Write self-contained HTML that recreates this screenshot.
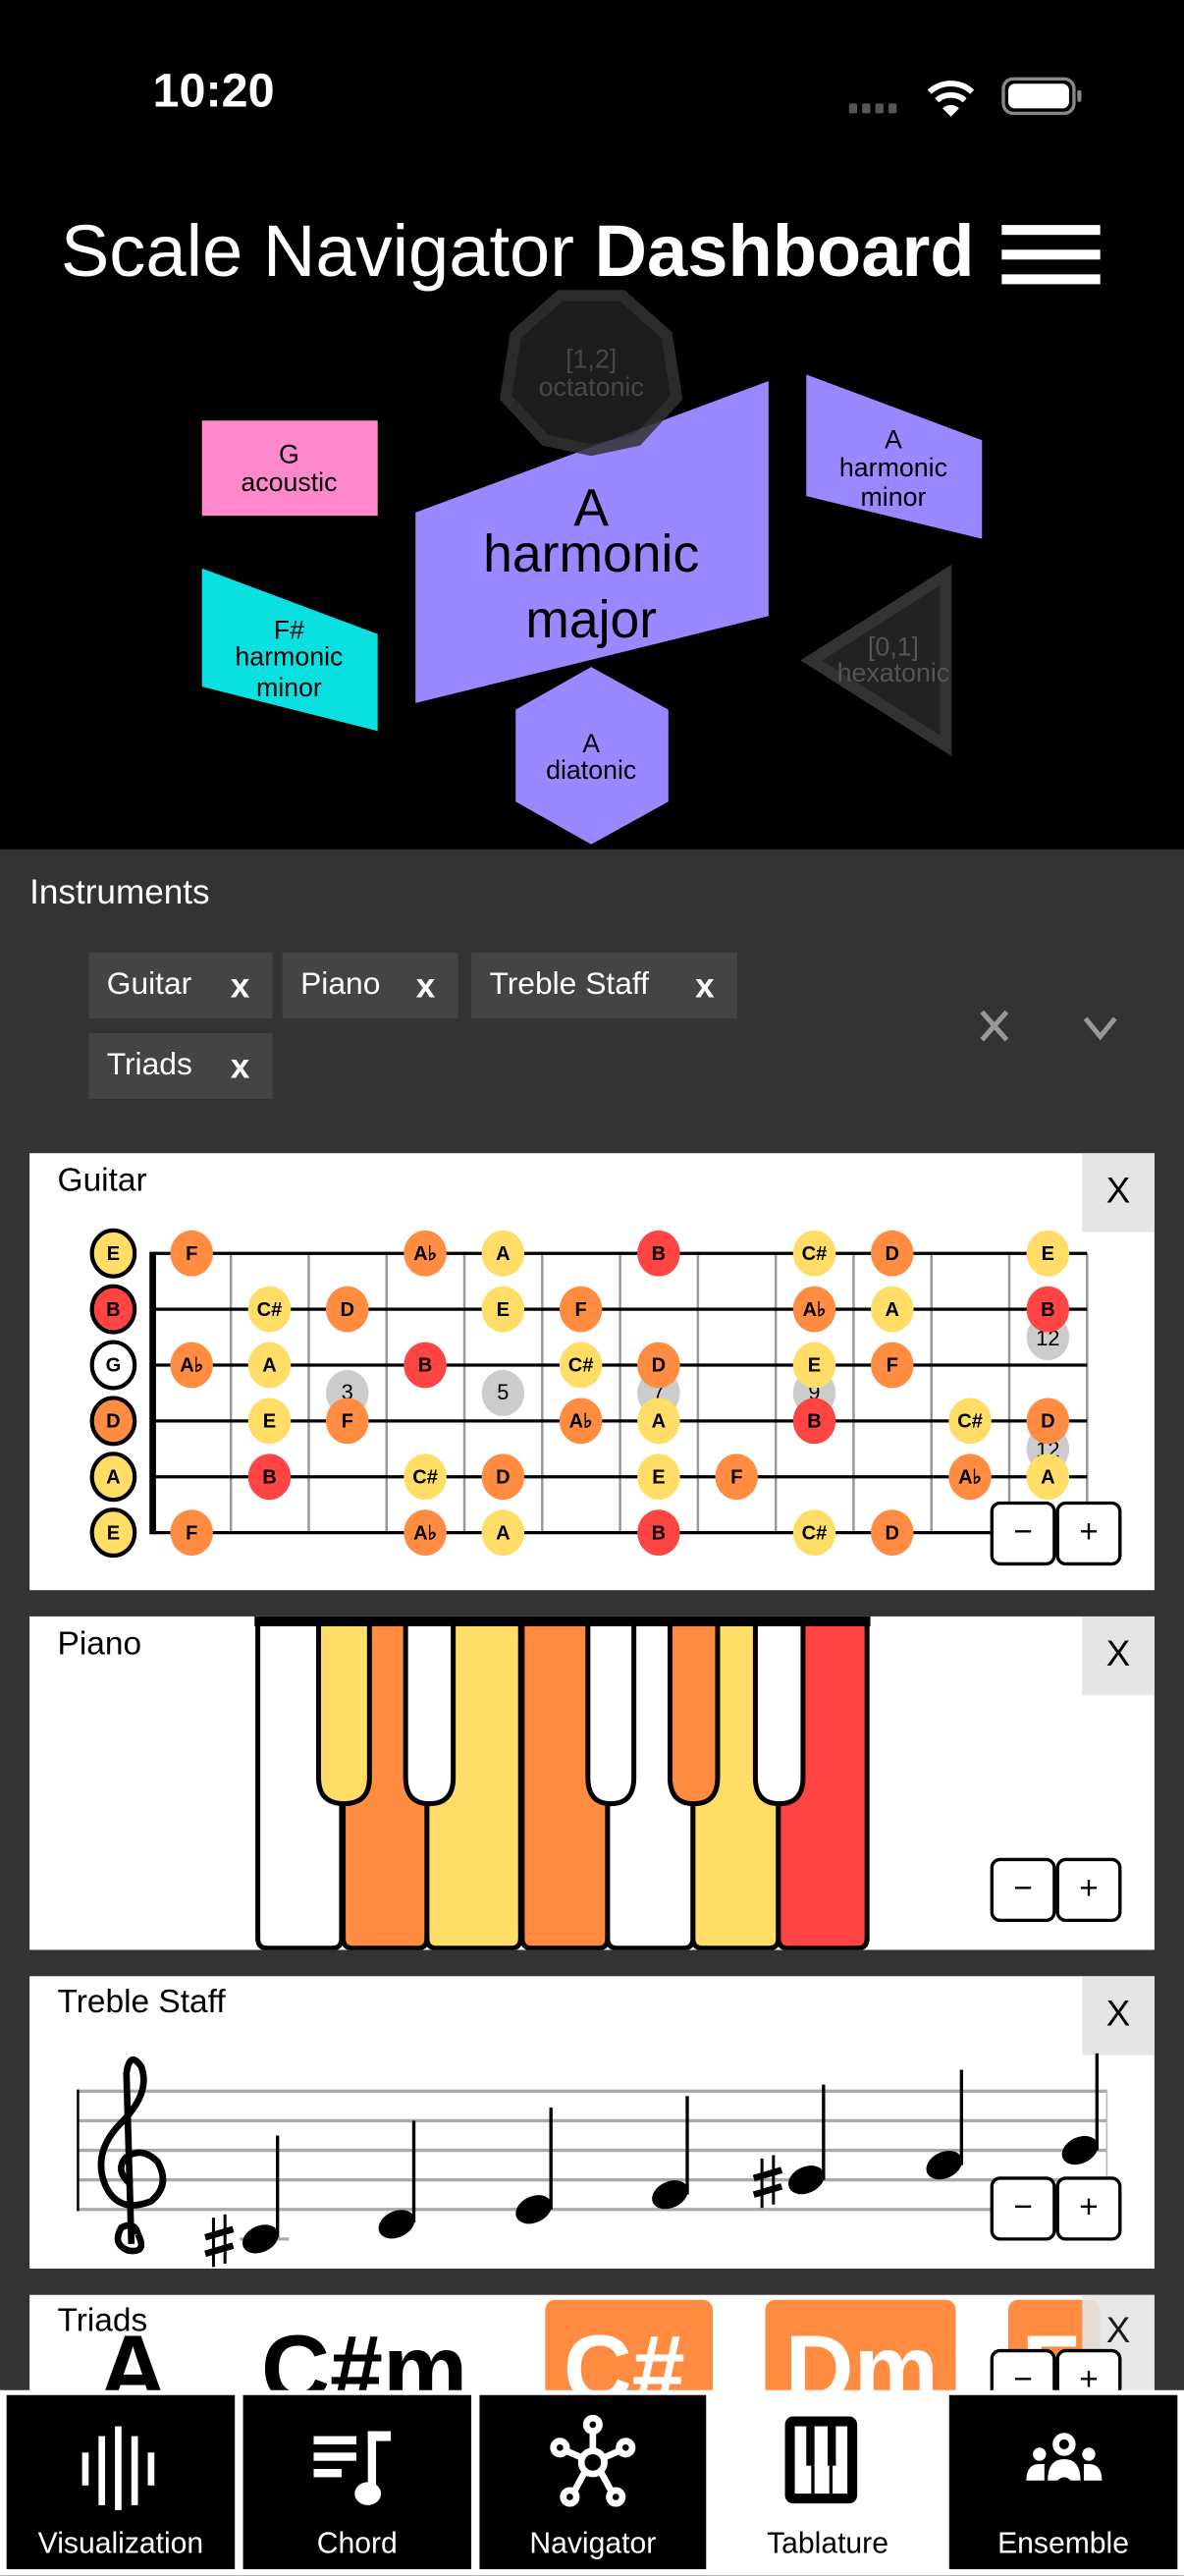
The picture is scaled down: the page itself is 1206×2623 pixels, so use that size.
<!DOCTYPE html>
<html><head><meta charset="utf-8"><style>
html,body{margin:0;padding:0;background:#333;}
body{width:1206px;height:2622px;overflow:hidden;position:relative;font-family:"Liberation Sans",sans-serif;}
#w{position:absolute;left:0;top:0;width:721px;height:1568px;transform:scale(1.67268);transform-origin:0 0;background:#333;overflow:hidden;}
.a{position:absolute;}
.chip{position:absolute;background:#444;color:#fff;font-size:19px;height:40px;line-height:40px;padding-left:11px;box-sizing:border-box;}
.chip b{position:absolute;right:14px;top:1px;font-size:21px;}
.card{position:absolute;left:18px;width:685px;background:#fff;overflow:hidden;}
.ttl{position:absolute;left:17px;font-size:20px;color:#000;}
.xb{position:absolute;right:0;top:0;width:44px;height:48px;background:#e5e5e5;font-size:22px;text-align:center;line-height:46px;color:#000;}
.btn{position:absolute;width:36px;height:35px;border:2px solid #000;border-radius:6px;background:#fff;font-size:20px;text-align:center;line-height:34px;color:#000;}
.nb{position:absolute;top:1458px;height:106px;background:#000;color:#fff;font-size:18px;text-align:center;}
.nb span{position:absolute;left:0;right:0;top:80px;}
</style></head><body><div id="w">
<div class="a" style="left:0;top:0;width:721px;height:517px;background:#000"></div>
<div class="a" style="left:93px;top:40px;color:#fff;font-size:29px;font-weight:bold">10:20</div>
<svg class="a" style="left:510px;top:40px" width="160" height="40" viewBox="510 40 160 40">
<g fill="#555"><rect x="517" y="63" width="5" height="6" rx="1"/><rect x="525" y="63" width="5" height="6" rx="1"/><rect x="533" y="63" width="5" height="6" rx="1"/><rect x="541" y="63" width="5" height="6" rx="1"/></g>
<path d="M566 56 A19 19 0 0 1 592 56" stroke="#fff" stroke-width="3.5" fill="none"/>
<path d="M570.5 61 A13 13 0 0 1 587.5 61" stroke="#fff" stroke-width="3.5" fill="none"/>
<path d="M574 66 L579 71 L584 66 A7 7 0 0 0 574 66Z" fill="#fff"/>
<rect x="611" y="48" width="43" height="21" rx="6" fill="none" stroke="#888" stroke-width="2"/>
<rect x="614" y="51" width="37" height="15" rx="4" fill="#fff"/>
<rect x="656" y="55" width="2.5" height="7" rx="1" fill="#888"/>
</svg>
<div class="a" style="left:37px;top:129px;color:#fff;font-size:44.3px;white-space:nowrap">Scale Navigator <b>Dashboard</b></div>
<div class="a" style="left:610px;top:137px;width:60px;height:6px;background:#fff"></div>
<div class="a" style="left:610px;top:152px;width:60px;height:6px;background:#fff"></div>
<div class="a" style="left:610px;top:167px;width:60px;height:6px;background:#fff"></div>
<svg class="a" style="left:0;top:0" width="721" height="517" viewBox="0 0 721 517" font-family="Liberation Sans, sans-serif" text-anchor="middle">
<polygon points="253,312 468,232 468,375 253,428" fill="#9988ff"/>
<g opacity="0.85">
<polygon points="341,180 379,180 406,204 412,242 388,268 360,274 332,268 308,242 314,204" fill="#222" stroke="#333" stroke-width="7"/>
<text x="360" y="224" font-size="16" fill="#555">[1,2]</text>
<text x="360" y="241" font-size="16" fill="#555">octatonic</text>
</g>
<rect x="123" y="256" width="107" height="58" fill="#ff88cc"/>
<text x="176" y="282" font-size="16">G</text><text x="176" y="299" font-size="16">acoustic</text>
<text x="360" y="320" font-size="32">A</text>
<text x="360" y="348" font-size="32">harmonic</text>
<text x="360" y="388" font-size="32">major</text>
<polygon points="491,228 598,268 598,328 491,302" fill="#9988ff"/>
<text x="544" y="273" font-size="16">A</text><text x="544" y="290" font-size="16">harmonic</text><text x="544" y="308" font-size="16">minor</text>
<polygon points="123,346 230,386 230,445 123,418" fill="#0be0e0"/>
<text x="176" y="389" font-size="16">F#</text><text x="176" y="405" font-size="16">harmonic</text><text x="176" y="424" font-size="16">minor</text>
<polygon points="360,406 407,432 407,488 360,514 314,488 314,432" fill="#9988ff"/>
<text x="360" y="458" font-size="16">A</text><text x="360" y="474" font-size="16">diatonic</text>
<polygon points="494,402 576,350 576,454" fill="#222" stroke="#333" stroke-width="7"/>
<text x="544" y="399" font-size="16" fill="#555">[0,1]</text><text x="544" y="415" font-size="16" fill="#555">hexatonic</text>
</svg>
<div class="a" style="left:18px;top:532px;color:#fff;font-size:21px">Instruments</div>
<div class="chip" style="left:54px;top:580px;width:112px">Guitar<b>x</b></div>
<div class="chip" style="left:172px;top:580px;width:107px">Piano<b>x</b></div>
<div class="chip" style="left:287px;top:580px;width:162px">Treble Staff<b>x</b></div>
<div class="chip" style="left:54px;top:629px;width:112px">Triads<b>x</b></div>
<svg class="a" style="left:595px;top:612px" width="90" height="26" viewBox="595 612 90 26"><path d="M598 616 L613 633 M613 616 L598 633" stroke="#999" stroke-width="3"/><path d="M661 620 L670 631 L679 620" stroke="#999" stroke-width="3" fill="none"/></svg>

<!-- Guitar -->
<div class="card" style="top:702px;height:266px">
<div class="ttl" style="top:6px">Guitar</div><div class="xb">X</div>
<svg class="a" style="left:-18px;top:-702px" width="721" height="1000" viewBox="0 0 721 1000" font-family="Liberation Sans, sans-serif" font-size="12" font-weight="bold" text-anchor="middle">
<g stroke="#999" stroke-width="1.5"><line x1="140.6" y1="763" x2="140.6" y2="933"/><line x1="188" y1="763" x2="188" y2="933"/><line x1="235.4" y1="763" x2="235.4" y2="933"/><line x1="282.8" y1="763" x2="282.8" y2="933"/><line x1="330.2" y1="763" x2="330.2" y2="933"/><line x1="377.6" y1="763" x2="377.6" y2="933"/><line x1="425" y1="763" x2="425" y2="933"/><line x1="472.4" y1="763" x2="472.4" y2="933"/><line x1="519.8" y1="763" x2="519.8" y2="933"/><line x1="567.2" y1="763" x2="567.2" y2="933"/><line x1="614.6" y1="763" x2="614.6" y2="933"/><line x1="662" y1="763" x2="662" y2="933"/></g>
<g stroke="#000" stroke-width="2"><line x1="93" y1="763" x2="662" y2="763"/><line x1="93" y1="797" x2="662" y2="797"/><line x1="93" y1="831" x2="662" y2="831"/><line x1="93" y1="865" x2="662" y2="865"/><line x1="93" y1="899" x2="662" y2="899"/><line x1="93" y1="933" x2="662" y2="933"/></g>
<line x1="93" y1="762" x2="93" y2="934" stroke="#000" stroke-width="4"/>
<g fill="#ccc"><ellipse cx="211.5" cy="848" rx="13" ry="14"/><ellipse cx="306.3" cy="848" rx="13" ry="14"/><ellipse cx="401.1" cy="848" rx="13" ry="14"/><ellipse cx="495.9" cy="848" rx="13" ry="14"/><ellipse cx="638.1" cy="814" rx="13" ry="14"/><ellipse cx="638.1" cy="882" rx="13" ry="14"/></g>
<g font-weight="normal" font-size="13"><text x="211.5" y="852">3</text><text x="306.3" y="852">5</text><text x="401.1" y="852">7</text><text x="495.9" y="852">9</text><text x="638.1" y="819">12</text><text x="638.1" y="887">12</text></g>
<g stroke="#000" stroke-width="2.5"><ellipse cx="69" cy="763" rx="13" ry="14" fill="#ffdd66"/><ellipse cx="69" cy="797" rx="13" ry="14" fill="#ff4444"/><ellipse cx="69" cy="831" rx="13" ry="14" fill="#fff"/><ellipse cx="69" cy="865" rx="13" ry="14" fill="#ff8c40"/><ellipse cx="69" cy="899" rx="13" ry="14" fill="#ffdd66"/><ellipse cx="69" cy="933" rx="13" ry="14" fill="#ffdd66"/></g>
<g>
<ellipse cx="116.7" cy="763" rx="13" ry="14" fill="#ff8c40"/><ellipse cx="258.9" cy="763" rx="13" ry="14" fill="#ff8c40"/><ellipse cx="306.3" cy="763" rx="13" ry="14" fill="#ffdd66"/><ellipse cx="401.1" cy="763" rx="13" ry="14" fill="#ff4444"/><ellipse cx="495.9" cy="763" rx="13" ry="14" fill="#ffdd66"/><ellipse cx="543.3" cy="763" rx="13" ry="14" fill="#ff8c40"/><ellipse cx="638.1" cy="763" rx="13" ry="14" fill="#ffdd66"/>
<ellipse cx="164.1" cy="797" rx="13" ry="14" fill="#ffdd66"/><ellipse cx="211.5" cy="797" rx="13" ry="14" fill="#ff8c40"/><ellipse cx="306.3" cy="797" rx="13" ry="14" fill="#ffdd66"/><ellipse cx="353.7" cy="797" rx="13" ry="14" fill="#ff8c40"/><ellipse cx="495.9" cy="797" rx="13" ry="14" fill="#ff8c40"/><ellipse cx="543.3" cy="797" rx="13" ry="14" fill="#ffdd66"/><ellipse cx="638.1" cy="797" rx="13" ry="14" fill="#ff4444"/>
<ellipse cx="116.7" cy="831" rx="13" ry="14" fill="#ff8c40"/><ellipse cx="164.1" cy="831" rx="13" ry="14" fill="#ffdd66"/><ellipse cx="258.9" cy="831" rx="13" ry="14" fill="#ff4444"/><ellipse cx="353.7" cy="831" rx="13" ry="14" fill="#ffdd66"/><ellipse cx="401.1" cy="831" rx="13" ry="14" fill="#ff8c40"/><ellipse cx="495.9" cy="831" rx="13" ry="14" fill="#ffdd66"/><ellipse cx="543.3" cy="831" rx="13" ry="14" fill="#ff8c40"/>
<ellipse cx="164.1" cy="865" rx="13" ry="14" fill="#ffdd66"/><ellipse cx="211.5" cy="865" rx="13" ry="14" fill="#ff8c40"/><ellipse cx="353.7" cy="865" rx="13" ry="14" fill="#ff8c40"/><ellipse cx="401.1" cy="865" rx="13" ry="14" fill="#ffdd66"/><ellipse cx="495.9" cy="865" rx="13" ry="14" fill="#ff4444"/><ellipse cx="590.7" cy="865" rx="13" ry="14" fill="#ffdd66"/><ellipse cx="638.1" cy="865" rx="13" ry="14" fill="#ff8c40"/>
<ellipse cx="164.1" cy="899" rx="13" ry="14" fill="#ff4444"/><ellipse cx="258.9" cy="899" rx="13" ry="14" fill="#ffdd66"/><ellipse cx="306.3" cy="899" rx="13" ry="14" fill="#ff8c40"/><ellipse cx="401.1" cy="899" rx="13" ry="14" fill="#ffdd66"/><ellipse cx="448.5" cy="899" rx="13" ry="14" fill="#ff8c40"/><ellipse cx="590.7" cy="899" rx="13" ry="14" fill="#ff8c40"/><ellipse cx="638.1" cy="899" rx="13" ry="14" fill="#ffdd66"/>
<ellipse cx="116.7" cy="933" rx="13" ry="14" fill="#ff8c40"/><ellipse cx="258.9" cy="933" rx="13" ry="14" fill="#ff8c40"/><ellipse cx="306.3" cy="933" rx="13" ry="14" fill="#ffdd66"/><ellipse cx="401.1" cy="933" rx="13" ry="14" fill="#ff4444"/><ellipse cx="495.9" cy="933" rx="13" ry="14" fill="#ffdd66"/><ellipse cx="543.3" cy="933" rx="13" ry="14" fill="#ff8c40"/>
</g>
<g>
<text x="69" y="767">E</text><text x="69" y="801">B</text><text x="69" y="835">G</text><text x="69" y="869">D</text><text x="69" y="903">A</text><text x="69" y="937">E</text>
<text x="116.7" y="767">F</text><text x="258.9" y="767">A♭</text><text x="306.3" y="767">A</text><text x="401.1" y="767">B</text><text x="495.9" y="767">C#</text><text x="543.3" y="767">D</text><text x="638.1" y="767">E</text>
<text x="164.1" y="801">C#</text><text x="211.5" y="801">D</text><text x="306.3" y="801">E</text><text x="353.7" y="801">F</text><text x="495.9" y="801">A♭</text><text x="543.3" y="801">A</text><text x="638.1" y="801">B</text>
<text x="116.7" y="835">A♭</text><text x="164.1" y="835">A</text><text x="258.9" y="835">B</text><text x="353.7" y="835">C#</text><text x="401.1" y="835">D</text><text x="495.9" y="835">E</text><text x="543.3" y="835">F</text>
<text x="164.1" y="869">E</text><text x="211.5" y="869">F</text><text x="353.7" y="869">A♭</text><text x="401.1" y="869">A</text><text x="495.9" y="869">B</text><text x="590.7" y="869">C#</text><text x="638.1" y="869">D</text>
<text x="164.1" y="903">B</text><text x="258.9" y="903">C#</text><text x="306.3" y="903">D</text><text x="401.1" y="903">E</text><text x="448.5" y="903">F</text><text x="590.7" y="903">A♭</text><text x="638.1" y="903">A</text>
<text x="116.7" y="937">F</text><text x="258.9" y="937">A♭</text><text x="306.3" y="937">A</text><text x="401.1" y="937">B</text><text x="495.9" y="937">C#</text><text x="543.3" y="937">D</text>
</g></svg>
<div class="btn" style="left:585px;top:212px">−</div><div class="btn" style="left:625px;top:212px">+</div>
</div>

<!-- Piano -->
<div class="card" style="top:984px;height:203px">
<div class="ttl" style="top:6px">Piano</div><div class="xb">X</div>
<svg class="a" style="left:-18px;top:-984px" width="721" height="1200" viewBox="0 0 721 1200">
<g stroke="#000" stroke-width="3">
<path d="M157 986 H208 V1180 Q208 1186 202 1186 H163 Q157 1186 157 1180Z" fill="#fff"/>
<path d="M209 986 H260 V1180 Q260 1186 254 1186 H215 Q209 1186 209 1180Z" fill="#ff8c40"/>
<path d="M260 986 H317 V1180 Q317 1186 311 1186 H266 Q260 1186 260 1180Z" fill="#ffdd66"/>
<path d="M318 986 H370 V1180 Q370 1186 364 1186 H324 Q318 1186 318 1180Z" fill="#ff8c40"/>
<path d="M370 986 H422 V1180 Q422 1186 416 1186 H376 Q370 1186 370 1180Z" fill="#fff"/>
<path d="M422 986 H474 V1180 Q474 1186 468 1186 H428 Q422 1186 422 1180Z" fill="#ffdd66"/>
<path d="M474 986 H528 V1180 Q528 1186 522 1186 H480 Q474 1186 474 1180Z" fill="#ff4444"/>
<path d="M194 986 V1082 Q194 1098 209.5 1098 Q225 1098 225 1082 V986" fill="#ffdd66"/>
<path d="M247 986 V1082 Q247 1098 261.5 1098 Q276 1098 276 1082 V986" fill="#fff"/>
<path d="M358 986 V1082 Q358 1098 372 1098 Q386 1098 386 1082 V986" fill="#fff"/>
<path d="M408 986 V1082 Q408 1098 422.5 1098 Q437 1098 437 1082 V986" fill="#ff8c40"/>
<path d="M460 986 V1082 Q460 1098 474.5 1098 Q489 1098 489 1082 V986" fill="#fff"/>
</g>
<rect x="155" y="984" width="375" height="6" fill="#000"/>
</svg>
<div class="btn" style="left:585px;top:147px">−</div><div class="btn" style="left:625px;top:147px">+</div>
</div>

<!-- Treble -->
<div class="card" style="top:1203px;height:178px">
<div class="ttl" style="top:5px">Treble Staff</div><div class="xb">X</div>
<svg class="a" style="left:-18px;top:-1203px" width="721" height="1400" viewBox="0 0 721 1400" font-family="DejaVu Sans, sans-serif">
<g stroke="#aaa" stroke-width="2"><line x1="47" y1="1273" x2="674" y2="1273"/><line x1="47" y1="1291" x2="674" y2="1291"/><line x1="47" y1="1309" x2="674" y2="1309"/><line x1="47" y1="1327" x2="674" y2="1327"/><line x1="47" y1="1345" x2="674" y2="1345"/><line x1="146" y1="1363" x2="176" y2="1363"/></g>
<line x1="47.5" y1="1272" x2="47.5" y2="1346" stroke="#000" stroke-width="1.5"/>
<line x1="674" y1="1272" x2="674" y2="1346" stroke="#bbb" stroke-width="1"/>
<path d="M84 1360 Q90 1372 78 1370 Q68 1366 74 1356 Q82 1352 84 1360 M80 1366 L77 1262 Q79 1248 86 1258 Q92 1274 74 1292 Q56 1310 64 1330 Q72 1348 92 1340 Q104 1330 96 1316 Q86 1306 76 1314 Q70 1322 80 1330" stroke="#000" stroke-width="4" fill="none"/>
<g fill="#000">
<ellipse cx="158.6" cy="1363" rx="11.5" ry="8" transform="rotate(-25 158.6 1363)"/><rect x="168" y="1300" width="2" height="62"/>
<ellipse cx="241.5" cy="1354" rx="11.5" ry="8" transform="rotate(-25 241.5 1354)"/><rect x="251" y="1291" width="2" height="62"/>
<ellipse cx="325" cy="1345" rx="11.5" ry="8" transform="rotate(-25 325 1345)"/><rect x="334.5" y="1283" width="2" height="62"/>
<ellipse cx="408" cy="1336" rx="11.5" ry="8" transform="rotate(-25 408 1336)"/><rect x="417.5" y="1276" width="2" height="60"/>
<ellipse cx="491" cy="1327" rx="11.5" ry="8" transform="rotate(-25 491 1327)"/><rect x="500.5" y="1269" width="2" height="58"/>
<ellipse cx="575" cy="1318" rx="11.5" ry="8" transform="rotate(-25 575 1318)"/><rect x="584.5" y="1260" width="2" height="58"/>
<ellipse cx="657.6" cy="1309" rx="11.5" ry="8" transform="rotate(-25 657.6 1309)"/><rect x="667" y="1250" width="2" height="59"/>
</g>
<g stroke="#000"><path d="M130 1350 V1380 M137 1348 V1378" stroke-width="1.8"/><path d="M125 1362 L142 1357 M125 1372 L142 1367" stroke-width="4"/>
<path d="M464 1314 V1344 M471 1312 V1342" stroke-width="1.8"/><path d="M459 1326 L476 1321 M459 1336 L476 1331" stroke-width="4"/></g>
</svg>
<div class="btn" style="left:585px;top:122px">−</div><div class="btn" style="left:625px;top:122px">+</div>
</div>

<!-- Triads -->
<div class="card" style="top:1397px;height:60px">
<div class="a" style="left:314px;top:3px;width:102px;height:70px;background:#ff8c40;border-radius:6px"></div>
<div class="a" style="left:448px;top:3px;width:116px;height:70px;background:#ff8c40;border-radius:6px"></div>
<div class="a" style="left:596px;top:3px;width:56px;height:70px;background:#ff8c40;border-radius:6px"></div>
<div class="a" style="left:42px;top:12px;font-size:58px;font-weight:bold;color:#000">A</div>
<div class="a" style="left:141px;top:12px;font-size:58px;font-weight:bold;color:#000">C#m</div>
<div class="a" style="left:325px;top:12px;font-size:58px;font-weight:bold;color:#fff">C#</div>
<div class="a" style="left:460px;top:12px;font-size:58px;font-weight:bold;color:#fff">Dm</div>
<div class="a" style="left:604px;top:12px;font-size:58px;font-weight:bold;color:#fff">F</div>
<div class="ttl" style="top:5px">Triads</div>
<div class="xb" style="height:60px;opacity:.9;line-height:44px">X</div>
<div class="btn" style="left:585px;top:33px">−</div><div class="btn" style="left:625px;top:33px">+</div>
</div>

<!-- Nav -->
<div class="a" style="left:0;top:1455px;width:721px;height:113px;background:#fff"></div>
<div class="nb" style="left:4px;width:139px"><svg class="a" style="left:40px;top:10px" width="60" height="60" viewBox="0 0 60 60" fill="#fff"><rect x="6" y="25" width="4" height="20"/><rect x="16" y="15" width="4" height="42"/><rect x="26" y="9" width="4" height="56"/><rect x="36" y="15" width="4" height="42"/><rect x="46" y="25" width="4" height="20"/></svg><span>Visualization</span></div>
<div class="nb" style="left:148px;width:139px"><svg class="a" style="left:40px;top:10px" width="60" height="60" viewBox="0 0 60 60" fill="#fff"><rect x="3" y="15" width="26" height="5"/><rect x="3" y="25" width="26" height="5"/><rect x="3" y="35" width="17" height="5"/><rect x="36" y="12" width="5" height="40"/><rect x="36" y="12" width="14" height="6"/><ellipse cx="36" cy="50" rx="8" ry="7"/></svg><span>Chord</span></div>
<div class="nb" style="left:292px;width:138px"><svg class="a" style="left:39px;top:10px" width="60" height="60" viewBox="0 0 60 60" fill="none" stroke="#fff" stroke-width="4"><circle cx="30" cy="31" r="7"/><circle cx="30" cy="8" r="4"/><circle cx="10" cy="22" r="4"/><circle cx="50" cy="22" r="4"/><circle cx="16" cy="52" r="4"/><circle cx="44" cy="52" r="4"/><path d="M30 12 V24 M14 24 L23 28 M46 24 L37 28 M19 48 L25 37 M41 48 L35 37"/></svg><span>Navigator</span></div>
<div class="nb" style="left:434px;width:140px;background:#fff;color:#000"><svg class="a" style="left:40px;top:10px" width="60" height="60" viewBox="0 0 60 60"><rect x="4" y="3" width="44" height="53" rx="5" fill="#000"/><rect x="10" y="9" width="32" height="41" fill="#fff"/><rect x="17" y="9" width="5" height="24" fill="#000"/><rect x="30" y="9" width="5" height="24" fill="#000"/><rect x="20" y="33" width="2" height="17" fill="#000"/><rect x="31" y="33" width="2" height="17" fill="#000"/></svg><span>Tablature</span></div>
<div class="nb" style="left:578px;width:139px"><svg class="a" style="left:40px;top:10px" width="60" height="60" viewBox="0 0 60 60" fill="#fff"><circle cx="30" cy="20" r="5" fill="none" stroke="#fff" stroke-width="4"/><circle cx="15" cy="26" r="4"/><circle cx="45" cy="26" r="4"/><path d="M7 42 Q7 32 15 32 H18 V42Z M53 42 Q53 32 45 32 H42 V42Z M20 42 Q20 29 30 29 Q40 29 40 42 H34 Q30 38 26 42Z"/><rect x="24" y="38" width="12" height="2"/></svg><span>Ensemble</span></div>
</div></body></html>
